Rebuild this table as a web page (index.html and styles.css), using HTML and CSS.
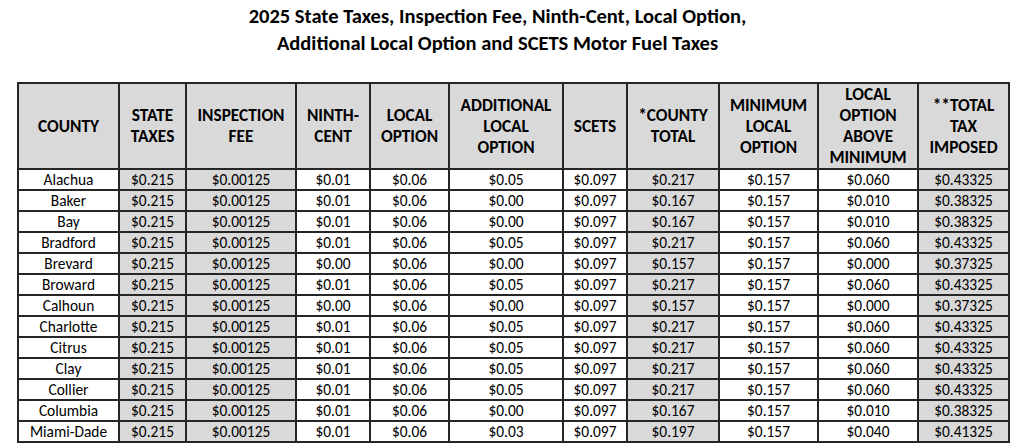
FILE: index.html
```html
<!DOCTYPE html>
<html>
<head>
<meta charset="utf-8">
<link rel="stylesheet" href="styles.css">
</head>
<body>
<div class="page">
  <h1 class="title">2025 State Taxes, Inspection Fee, Ninth-Cent, Local Option,<br>Additional Local Option and SCETS Motor Fuel Taxes</h1>
  <table class="taxes">
    <colgroup>
      <col class="c-county"><col class="c-state"><col class="c-insp"><col class="c-ninth"><col class="c-local"><col class="c-add"><col class="c-scets"><col class="c-ctotal"><col class="c-min"><col class="c-above"><col class="c-total">
    </colgroup>
    <thead>
      <tr>
        <th>COUNTY</th>
        <th>STATE<br>TAXES</th>
        <th>INSPECTION<br>FEE</th>
        <th>NINTH-<br>CENT</th>
        <th>LOCAL<br>OPTION</th>
        <th>ADDITIONAL<br>LOCAL<br>OPTION</th>
        <th>SCETS</th>
        <th>*COUNTY<br>TOTAL</th>
        <th>MINIMUM<br>LOCAL<br>OPTION</th>
        <th>LOCAL<br>OPTION<br>ABOVE<br>MINIMUM</th>
        <th>**TOTAL<br>TAX<br>IMPOSED</th>
      </tr>
    </thead>
    <tbody>
      <tr><td>Alachua</td><td class="g">$0.215</td><td class="g">$0.00125</td><td>$0.01</td><td>$0.06</td><td>$0.05</td><td>$0.097</td><td class="g">$0.217</td><td>$0.157</td><td>$0.060</td><td class="g">$0.43325</td></tr>
      <tr><td>Baker</td><td class="g">$0.215</td><td class="g">$0.00125</td><td>$0.01</td><td>$0.06</td><td>$0.00</td><td>$0.097</td><td class="g">$0.167</td><td>$0.157</td><td>$0.010</td><td class="g">$0.38325</td></tr>
      <tr><td>Bay</td><td class="g">$0.215</td><td class="g">$0.00125</td><td>$0.01</td><td>$0.06</td><td>$0.00</td><td>$0.097</td><td class="g">$0.167</td><td>$0.157</td><td>$0.010</td><td class="g">$0.38325</td></tr>
      <tr><td>Bradford</td><td class="g">$0.215</td><td class="g">$0.00125</td><td>$0.01</td><td>$0.06</td><td>$0.05</td><td>$0.097</td><td class="g">$0.217</td><td>$0.157</td><td>$0.060</td><td class="g">$0.43325</td></tr>
      <tr><td>Brevard</td><td class="g">$0.215</td><td class="g">$0.00125</td><td>$0.00</td><td>$0.06</td><td>$0.00</td><td>$0.097</td><td class="g">$0.157</td><td>$0.157</td><td>$0.000</td><td class="g">$0.37325</td></tr>
      <tr><td>Broward</td><td class="g">$0.215</td><td class="g">$0.00125</td><td>$0.01</td><td>$0.06</td><td>$0.05</td><td>$0.097</td><td class="g">$0.217</td><td>$0.157</td><td>$0.060</td><td class="g">$0.43325</td></tr>
      <tr><td>Calhoun</td><td class="g">$0.215</td><td class="g">$0.00125</td><td>$0.00</td><td>$0.06</td><td>$0.00</td><td>$0.097</td><td class="g">$0.157</td><td>$0.157</td><td>$0.000</td><td class="g">$0.37325</td></tr>
      <tr><td>Charlotte</td><td class="g">$0.215</td><td class="g">$0.00125</td><td>$0.01</td><td>$0.06</td><td>$0.05</td><td>$0.097</td><td class="g">$0.217</td><td>$0.157</td><td>$0.060</td><td class="g">$0.43325</td></tr>
      <tr><td>Citrus</td><td class="g">$0.215</td><td class="g">$0.00125</td><td>$0.01</td><td>$0.06</td><td>$0.05</td><td>$0.097</td><td class="g">$0.217</td><td>$0.157</td><td>$0.060</td><td class="g">$0.43325</td></tr>
      <tr><td>Clay</td><td class="g">$0.215</td><td class="g">$0.00125</td><td>$0.01</td><td>$0.06</td><td>$0.05</td><td>$0.097</td><td class="g">$0.217</td><td>$0.157</td><td>$0.060</td><td class="g">$0.43325</td></tr>
      <tr><td>Collier</td><td class="g">$0.215</td><td class="g">$0.00125</td><td>$0.01</td><td>$0.06</td><td>$0.05</td><td>$0.097</td><td class="g">$0.217</td><td>$0.157</td><td>$0.060</td><td class="g">$0.43325</td></tr>
      <tr><td>Columbia</td><td class="g">$0.215</td><td class="g">$0.00125</td><td>$0.01</td><td>$0.06</td><td>$0.00</td><td>$0.097</td><td class="g">$0.167</td><td>$0.157</td><td>$0.010</td><td class="g">$0.38325</td></tr>
      <tr><td>Miami-Dade</td><td class="g">$0.215</td><td class="g">$0.00125</td><td>$0.01</td><td>$0.06</td><td>$0.03</td><td>$0.097</td><td class="g">$0.197</td><td>$0.157</td><td>$0.040</td><td class="g">$0.41325</td></tr>
    </tbody>
  </table>
</div>
</body>
</html>
```
FILE: styles.css
```css
html, body {
  margin: 0;
  padding: 0;
  overflow: hidden;
  background: #fff;
}
.page {
  padding: 3px 0 0 17px;
  font-family: Carlito, Lato, "Open Sans", sans-serif;
  color: #000;
}
.title {
  width: 961px;
  margin: 0 0 25px 0;
  padding-right: 30px;
  text-align: center;
  font-size: 20.5px;
  line-height: 27px;
  font-weight: 700;
}
.taxes {
  border-collapse: collapse;
  table-layout: fixed;
  width: 991px;
  font-size: 15.4px;
}
.taxes th,
.taxes td {
  border: 2px solid #262626;
  text-align: center;
  padding: 0;
  white-space: nowrap;
  overflow: hidden;
}
.taxes th {
  background: #d9d9d9;
  font-weight: 700;
  font-size: 17.3px;
  line-height: 21px;
  height: 84px;
}
.taxes td {
  height: 19px;
  line-height: 19px;
}
.taxes td.g {
  background: #d9d9d9;
}
.c-county { width: 101px; }
.c-state { width: 67px; }
.c-insp { width: 110px; }
.c-ninth { width: 74px; }
.c-local { width: 79px; }
.c-add { width: 114px; }
.c-scets { width: 64px; }
.c-ctotal { width: 92px; }
.c-min { width: 99px; }
.c-above { width: 100px; }
.c-total { width: 91px; }
```
